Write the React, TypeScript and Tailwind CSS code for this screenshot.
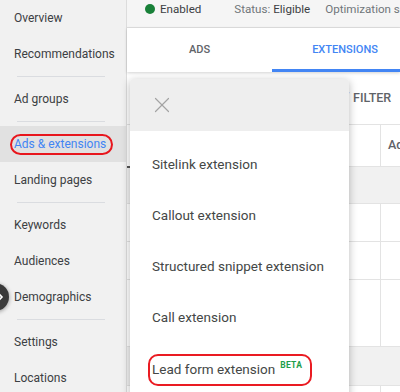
import { X, Filter } from "lucide-react";

type NavEntry = { label: string; active?: boolean } | "divider";

const NAV: NavEntry[] = [
  { label: "Overview" },
  { label: "Recommendations" },
  "divider",
  { label: "Ad groups" },
  "divider",
  { label: "Ads & extensions", active: true },
  { label: "Landing pages" },
  "divider",
  { label: "Keywords" },
  { label: "Audiences" },
  { label: "Demographics" },
  "divider",
  { label: "Settings" },
  { label: "Locations" },
];

const EXTENSIONS = [
  "Sitelink extension",
  "Callout extension",
  "Structured snippet extension",
  "Call extension",
];

function Sidebar() {
  return (
    <nav className="w-[127px] shrink-0 h-full bg-[#f1f1f1] border-r border-[#dcdcdc] overflow-hidden">
      {NAV.map((item, i) =>
        item === "divider" ? (
          <div key={i} className="py-1">
            <div className="ml-[17px] w-[88px] h-px bg-[#dadce0]" />
          </div>
        ) : item.active ? (
          <div key={i} className="h-9 flex items-center pl-[10px] bg-[#e1e1e1]">
            <span className="h-[21px] flex items-center border-2 border-[#e8161d] rounded-full pl-[2px] pr-[5px] text-[12px] text-[#4285f4]">
              {item.label}
            </span>
          </div>
        ) : (
          <div key={i} className="h-9 flex items-center pl-[14px] text-[12px] text-[#3c4043]">
            {item.label}
          </div>
        )
      )}
    </nav>
  );
}

function AddExtensionMenu() {
  return (
    <div className="absolute left-[3px] top-[79px] w-[219px] h-[330px] bg-white rounded-t-[3px] shadow-[0_2px_9px_rgba(0,0,0,0.28)] z-20">
      <div className="h-[52px] bg-[#eeeeee] rounded-t-[3px] flex items-center pl-[19px]">
        <X size={26} strokeWidth={1.1} className="text-[#a3a3a3]" />
      </div>
      <div className="pt-2">
        {EXTENSIONS.map((name) => (
          <div key={name} className="h-[51px] flex items-center pl-[22px] text-[13.5px] text-[#444746]">
            {name}
          </div>
        ))}
        <div className="h-[51px] flex items-center pl-[18px]">
          <span className="h-[32px] mt-[2px] flex items-center border-2 border-[#ea1b22] rounded-[10px] pl-[2px] pr-[8px] text-[13.5px] text-[#444746]">
            Lead form extension
            <span className="ml-[5px] -mt-[9px] text-[8.5px] leading-none font-bold tracking-[0.3px] text-[#1e9e4a]">BETA</span>
          </span>
        </div>
      </div>
    </div>
  );
}

function TableRow({ gray, h, lines = true }: { gray?: boolean; h: string; lines?: boolean }) {
  return (
    <div className={`flex border-b border-[#e3e3e3] ${h} ${gray ? "bg-[#f1f1f1]" : "bg-white"}`}>
      <div className={`w-[254px] shrink-0 ${lines ? "border-r border-[#e3e3e3]" : ""}`} />
      <div className="flex-1" />
    </div>
  );
}

export default function App() {
  return (
    <div className="relative w-[400px] h-[392px] overflow-hidden flex bg-white font-[family-name:Roboto,sans-serif]">
      <Sidebar />

      {/* collapse toggle, mostly off-screen */}
      <div className="absolute left-[-19px] top-[283px] w-[28px] h-[28px] rounded-full bg-[#3a3a3a] shadow-[0_1px_4px_rgba(0,0,0,0.4)] z-30 flex items-center justify-end pr-[5px]">
        <svg width="6" height="8" viewBox="0 0 6 8">
          <path d="M1 1 L4 4 L1 7" stroke="white" strokeWidth="1.6" fill="none" />
        </svg>
      </div>
      <div className="absolute left-[127px] top-[166px] w-[4px] h-[2px] bg-[#555] z-10" />

      <main className="relative flex-1 flex flex-col min-w-0">
        {/* status bar */}
        <div className="h-[28px] shrink-0 bg-[#f5f5f5] border-b border-[#e0e0e0] flex items-start pt-px pl-[18px] text-[11.6px] whitespace-nowrap overflow-hidden">
          <span className="shrink-0 w-[10px] h-[10px] rounded-full bg-[#188038] mt-[3px]" />
          <span className="shrink-0 ml-[5px] text-[#3c4043]">Enabled</span>
          <span className="shrink-0 ml-[33px] text-[#70757a]">
            Status: <span className="text-[#3c4043]">Eligible</span>
          </span>
          <span className="shrink-0 ml-[15px] text-[#70757a]">Optimization score</span>
        </div>

        {/* tabs */}
        <div className="relative z-10 h-[44px] shrink-0 flex bg-white shadow-[0_1px_3px_rgba(0,0,0,0.18)] text-[11px] font-medium">
          <div className="w-[145px] shrink-0 flex items-center justify-center text-[#5f6368]">ADS</div>
          <div className="w-[146px] shrink-0 flex items-center justify-center text-[#4285f4] border-b-[3px] border-[#4285f4] pt-[3px]">
            EXTENSIONS
          </div>
        </div>

        {/* table behind the menu */}
        <div className="flex-1 bg-white">
          <div className="h-[52px] flex items-center pl-[207px] gap-[3px]">
            <Filter size={16} className="shrink-0 text-[#4285f4]" />
            <span className="text-[12.5px] font-medium text-[#5f6368]">FILTER</span>
          </div>
          <div className="flex h-[43px] border-t border-b border-[#e3e3e3] bg-white">
            <div className="w-[254px] shrink-0 border-r border-[#e3e3e3]" />
            <div className="flex-1 min-w-0 flex items-center pl-[7px] text-[12.5px] font-medium text-[#5f6368] whitespace-nowrap overflow-hidden">
              Ad extension
            </div>
          </div>
          <TableRow gray h="h-[37px]" lines={false} />
          <TableRow h="h-[38px]" />
          <TableRow h="h-[38px]" />
          <TableRow h="h-[67px]" />
          <TableRow gray h="h-[39px]" lines={false} />
          <TableRow h="h-[38px]" />
        </div>

        <AddExtensionMenu />
      </main>
    </div>
  );
}
